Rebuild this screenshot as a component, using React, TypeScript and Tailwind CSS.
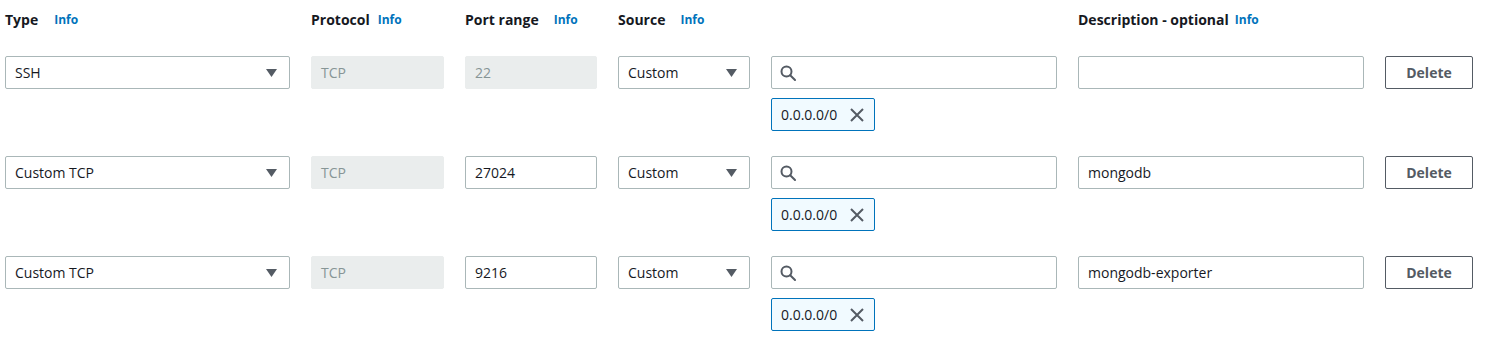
import React from "react";

const font = { fontFamily: '"Open Sans", "Noto Sans", Arial, sans-serif' };

const Caret = () => (
  <svg width="11" height="8" viewBox="0 0 11 8" className="shrink-0">
    <path d="M0 0 H11 L5.5 8 Z" fill="#545b64" />
  </svg>
);

const SearchIcon = () => (
  <svg width="16" height="16" viewBox="0 0 16 16" fill="none" stroke="#545b64" strokeWidth="2">
    <circle cx="6.5" cy="6.5" r="5" />
    <path d="M10.2 10.2 L15 15" strokeLinecap="round" />
  </svg>
);

const XIcon = () => (
  <svg width="14" height="14" viewBox="0 0 14 14" fill="none" stroke="#545b64" strokeWidth="2">
    <path d="M1 1 L13 13 M13 1 L1 13" />
  </svg>
);

function Label({ text, gap }: { text: string; gap: string }) {
  return (
    <div className="flex items-center">
      <span className="text-[14px] leading-[20px] font-bold text-[#16191f]">{text}</span>
      <span className={`text-[12px] leading-[20px] font-bold text-[#0073bb] ${gap}`}>Info</span>
    </div>
  );
}

function Select({ value }: { value: string }) {
  return (
    <div className="h-[33px] border border-[#aab7b8] rounded-[2px] bg-white flex items-center justify-between pl-[9px] pr-[12px]">
      <span className="text-[14px] text-[#16191f]">{value}</span>
      <Caret />
    </div>
  );
}

function Disabled({ value }: { value: string }) {
  return (
    <div className="h-[33px] border border-[#eaeded] rounded-[2px] bg-[#eaeded] flex items-center pl-[9px]">
      <span className="text-[14px] text-[#879596]">{value}</span>
    </div>
  );
}

function Input({ value }: { value: string }) {
  return (
    <div className="h-[33px] border border-[#aab7b8] rounded-[2px] bg-white flex items-center pl-[9px]">
      <span className="text-[14px] text-[#16191f]">{value}</span>
    </div>
  );
}

function Row({ type, port, portDisabled, desc }: { type: string; port: string; portDisabled: boolean; desc: string }) {
  return (
    <div className="grid grid-cols-[285px_133px_132px_132px_286px_286px_88px] gap-x-[21px] items-start">
      <Select value={type} />
      <Disabled value="TCP" />
      {portDisabled ? <Disabled value={port} /> : <Input value={port} />}
      <Select value="Custom" />
      <div className="flex flex-col gap-[9px]">
        <div className="h-[33px] border border-[#aab7b8] rounded-[2px] bg-white flex items-center pl-[8px]">
          <SearchIcon />
        </div>
        <div className="w-[104px] h-[33px] border border-[#0073bb] rounded-[2px] bg-[#f1faff] flex items-center justify-between pl-[9px] pr-[10px]">
          <span className="text-[14px] text-[#16191f]">0.0.0.0/0</span>
          <XIcon />
        </div>
      </div>
      <Input value={desc} />
      <div className="h-[33px] border border-[#545b64] rounded-[2px] bg-white flex items-center justify-center">
        <span className="text-[14px] font-bold text-[#545b64]">Delete</span>
      </div>
    </div>
  );
}

export default function App() {
  return (
    <div className="w-[1487px] h-[349px] bg-white pl-[5px]" style={font}>
      <div className="grid grid-cols-[285px_133px_132px_132px_286px_286px_88px] gap-x-[21px] items-start pt-[10px] h-[56px]">
        <Label text="Type" gap="ml-[16px]" />
        <Label text="Protocol" gap="ml-[8px]" />
        <Label text="Port range" gap="ml-[15px]" />
        <Label text="Source" gap="ml-[15px]" />
        <div />
        <Label text="Description - optional" gap="ml-[6px]" />
        <div />
      </div>
      <div className="flex flex-col gap-[25px]">
        <Row type="SSH" port="22" portDisabled={true} desc="" />
        <Row type="Custom TCP" port="27024" portDisabled={false} desc="mongodb" />
        <Row type="Custom TCP" port="9216" portDisabled={false} desc="mongodb-exporter" />
      </div>
    </div>
  );
}
